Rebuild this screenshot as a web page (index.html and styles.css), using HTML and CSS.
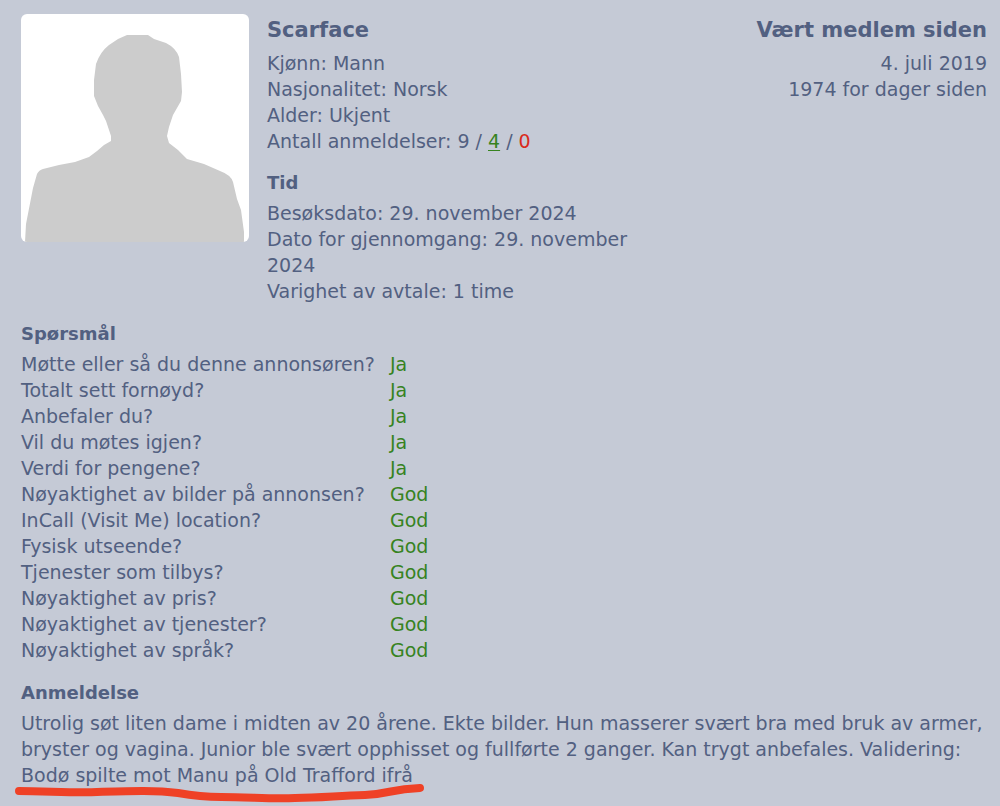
FILE: index.html
```
<!DOCTYPE html>
<html lang="no">
<head>
    <meta charset="UTF-8">
    <meta name="viewport" content="width=device-width, initial-scale=1.0">
    <title>Anmeldelse - Scarface</title>
    <link rel="stylesheet" href="styles.css">
</head>
<body>
    <div class="review">
        <div class="header">
            <svg class="avatar" viewBox="0 0 228 228" role="img" aria-label="Profilbilde">
                <rect width="228" height="228" fill="#fff"/>
                <path fill="#ccc" d="M4 228 L5 210 L12 174 L16 160 Q18 156 22 155 L38 151 L54 148 L68 143 L76 137 L83 131 L90 127 L90 122 L85 107 L82 101 L77 92 L73 82 L73 66 L75 50 Q79 38 88 31 L97 25 L106 21 L127 21 L133 25 L145 29 Q155 34 158 43 L160 60 L161 78 L160 87 L152 101 L148 113 L146 122 L148 129 L157 136 L166 145 L183 150 L199 157 Q210 161 212 168 L216 185 L220 196 L223 218 L223 228 Z"/>
            </svg>
            <div class="info">
                <h2>Scarface</h2>
                <p>Kjønn: Mann</p>
                <p>Nasjonalitet: Norsk</p>
                <p>Alder: Ukjent</p>
                <p>Antall anmeldelser: 9 / <a href="#" class="positive">4</a> / <span class="negative">0</span></p>
                <h3>Tid</h3>
                <p>Besøksdato: 29. november 2024</p>
                <p>Dato for gjennomgang: 29. november 2024</p>
                <p>Varighet av avtale: 1 time</p>
            </div>
            <div class="member">
                <h2>Vært medlem siden</h2>
                <p>4. juli 2019</p>
                <p>1974 for dager siden</p>
            </div>
        </div>

        <div class="section">
            <h3>Spørsmål</h3>
            <table class="questions">
                <tr><th scope="row">Møtte eller så du denne annonsøren?</th><td>Ja</td></tr>
                <tr><th scope="row">Totalt sett fornøyd?</th><td>Ja</td></tr>
                <tr><th scope="row">Anbefaler du?</th><td>Ja</td></tr>
                <tr><th scope="row">Vil du møtes igjen?</th><td>Ja</td></tr>
                <tr><th scope="row">Verdi for pengene?</th><td>Ja</td></tr>
                <tr><th scope="row">Nøyaktighet av bilder på annonsen?</th><td>God</td></tr>
                <tr><th scope="row">InCall (Visit Me) location?</th><td>God</td></tr>
                <tr><th scope="row">Fysisk utseende?</th><td>God</td></tr>
                <tr><th scope="row">Tjenester som tilbys?</th><td>God</td></tr>
                <tr><th scope="row">Nøyaktighet av pris?</th><td>God</td></tr>
                <tr><th scope="row">Nøyaktighet av tjenester?</th><td>God</td></tr>
                <tr><th scope="row">Nøyaktighet av språk?</th><td>God</td></tr>
            </table>
        </div>

        <div class="section">
            <h3>Anmeldelse</h3>
            <p>Utrolig søt liten dame i midten av 20 årene. Ekte bilder. Hun masserer svært bra med bruk av armer, bryster og vagina. Junior ble svært opphisset og fullførte 2 ganger. Kan trygt anbefales. Validering: <span class="marked">Bodø spilte mot Manu på Old Trafford ifrå<svg class="marker" viewBox="0 0 410 20" aria-hidden="true"><path d="M4 8 C30 8 60 10 82 9 C115 8 140 7 163 10 C180 13 190 14 206 14 C235 14 255 16 280 15 C305 15 320 13 350 12 C375 11 375 6 405 5"/></svg></span></p>
        </div>
    </div>
</body>
</html>
```
FILE: styles.css
```
body {
    margin: 0;
    background-color: #c5cad6;
    color: #526081;
    font-family: Verdana, "DejaVu Sans", sans-serif;
    font-size: 19px;
    line-height: 26px;
}
.review {
    padding: 14px 13px 16px 21px;
}
.header {
    display: flex;
    align-items: flex-start;
    gap: 18px;
}
.avatar {
    flex: none;
    width: 228px;
    height: 228px;
    border-radius: 6px;
}
.info {
    flex: 11;
}
.member {
    flex: 9;
    text-align: right;
}
h2 {
    margin: 0 0 4px;
    font-size: 21px;
    line-height: 32px;
}
h3 {
    margin: 0 0 4px;
    font-size: 18px;
    line-height: 26px;
}
.info h3 {
    margin-top: 16px;
}
p {
    margin: 0;
}
.positive {
    color: #37831f;
    text-underline-offset: 2px;
}
.negative {
    color: #d92b1c;
}
.section {
    margin-top: 17px;
}
.questions {
    border-collapse: collapse;
}
.questions th {
    width: 369px;
    padding: 0;
    font-weight: normal;
    text-align: left;
}
.questions td {
    padding: 0;
    color: #37831f;
}
.marked {
    display: inline-block;
    position: relative;
}
/* hand-drawn line below the validation text */
.marker {
    position: absolute;
    left: -6px;
    top: 21px;
    width: 410px;
    height: 20px;
}
.marker path {
    fill: none;
    stroke: #ef4126;
    stroke-width: 8;
    stroke-linecap: round;
    stroke-linejoin: round;
}
```
